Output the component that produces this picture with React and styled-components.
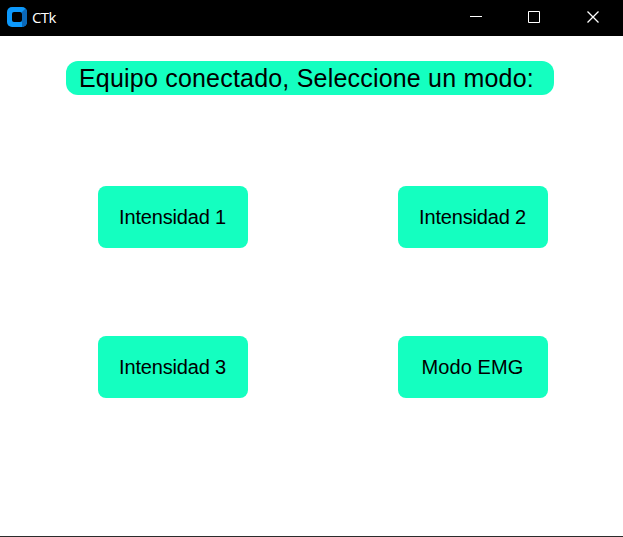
import React from "react";
import styled, { createGlobalStyle } from "styled-components";

const GlobalStyle = createGlobalStyle`
  *, *::before, *::after { box-sizing: border-box; }
  body { margin: 0; overflow: hidden; background: #fff; }
`;

const Window = styled.div`
  display: flex;
  flex-direction: column;
  width: 623px;
  height: 537px;
  background: #fff;
  border-bottom: 1px solid #2b2b2b;
  font-family: "Liberation Sans", Arial, sans-serif;
  color: #000;
`;

const TitleBar = styled.header`
  display: flex;
  align-items: center;
  height: 36px;
  padding: 0 1px 0 7px;
  background: #000;
  color: #fff;
`;

const AppIcon = styled.svg`
  display: block;
  width: 20px;
  height: 20px;
  margin-bottom: 2px;
`;

const Title = styled.span`
  flex: 1;
  margin: 0 0 2px 5px;
  font: 15px/20px "Open Sans", "Noto Sans", sans-serif;
  letter-spacing: -0.6px;
`;

const Controls = styled.div`
  display: flex;
  height: 100%;
`;

const Control = styled.button`
  display: flex;
  justify-content: center;
  width: ${({ $width }) => $width}px;
  height: 34px;
  padding: 11px 0 0;
  border: 0;
  background: transparent;
  color: #fff;
`;

const Glyph = styled.svg`
  display: block;
  width: 12px;
  height: 12px;
`;

const Content = styled.main`
  display: flex;
  flex-direction: column;
  padding-top: 25px;
`;

const Heading = styled.h1`
  width: 488px;
  height: 34px;
  margin: 0 0 0 66px;
  padding-left: 13px;
  border-radius: 12px;
  background: #14ffc0;
  font-size: 25px;
  font-weight: 400;
  letter-spacing: 0.2px;
  line-height: 35px;
  white-space: nowrap;
`;

const ModeGrid = styled.div`
  display: grid;
  grid-template-columns: repeat(2, 150px);
  grid-auto-rows: 62px;
  gap: 88px 150px;
  margin: 91px 0 0 98px;
`;

const ModeButton = styled.button`
  padding: 0 1px 0 0;
  border: 0;
  border-radius: 8px;
  background: #14ffc0;
  color: #000;
  font: 20px/24px "Liberation Sans", Arial, sans-serif;
  letter-spacing: ${({ $tracking }) => $tracking}px;
`;

const modes = [
  { label: "Intensidad 1", tracking: -0.18 },
  { label: "Intensidad 2", tracking: -0.18 },
  { label: "Intensidad 3", tracking: -0.18 },
  { label: "Modo EMG", tracking: 0.1 },
];

const controls = [
  { label: "Minimizar", path: "M0 5.5H12", width: 58 },
  { label: "Maximizar", path: "M.5 .5H11.5V11.5H.5Z", width: 58 },
  { label: "Cerrar", path: "M.5 .5L11.5 11.5M11.5 .5L.5 11.5", width: 59, stroke: 1.3 },
];

export default function App() {
  return (
    <>
      <GlobalStyle />
      <Window>
        <TitleBar>
          <AppIcon viewBox="0 0 20 20">
            <rect width="20" height="20" rx="5" fill="#0d99fc" />
            <path d="M15 5L18.5 1.5A5 5 0 0 1 20 5V15a5 5 0 0 1-5 5z" fill="#0b68b8" />
            <rect x="5" y="5" width="10" height="10" rx="2" fill="#000" />
          </AppIcon>
          <Title>CTk</Title>
          <Controls>
            {controls.map(({ label, path, width, stroke = 1 }) => (
              <Control key={label} aria-label={label} $width={width}>
                <Glyph viewBox="0 0 12 12" fill="none" stroke="currentColor" strokeWidth={stroke}>
                  <path d={path} />
                </Glyph>
              </Control>
            ))}
          </Controls>
        </TitleBar>
        <Content>
          <Heading>Equipo conectado, Seleccione un modo:</Heading>
          <ModeGrid>
            {modes.map(({ label, tracking }) => (
              <ModeButton key={label} $tracking={tracking}>{label}</ModeButton>
            ))}
          </ModeGrid>
        </Content>
      </Window>
    </>
  );
}
